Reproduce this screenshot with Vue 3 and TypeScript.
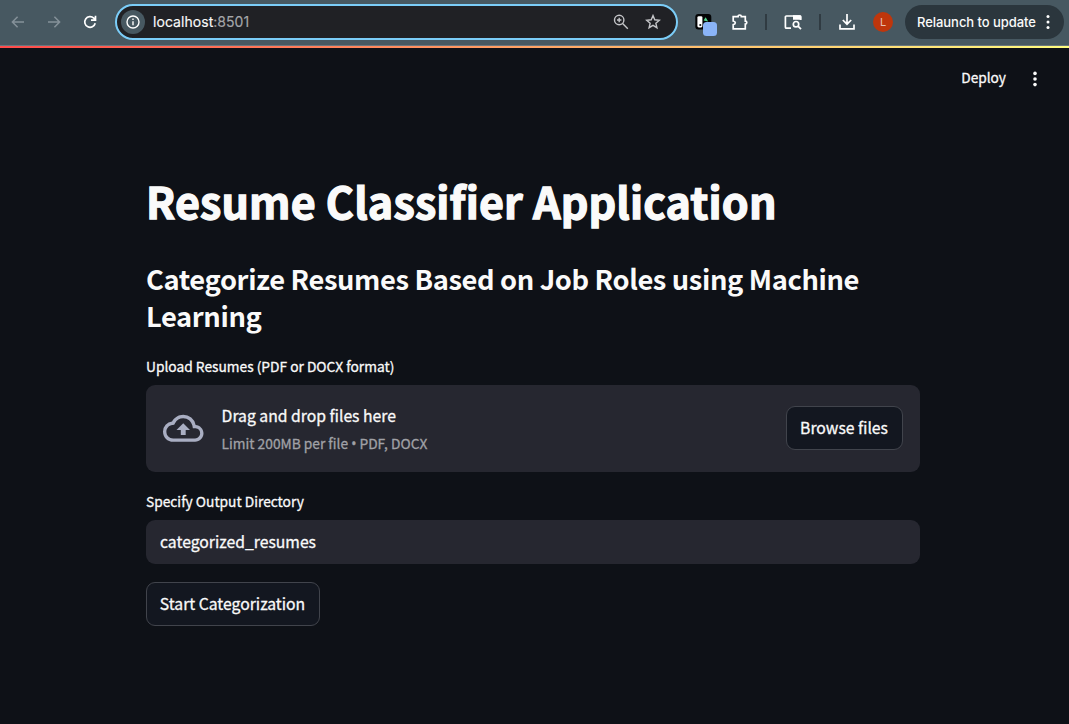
<script setup lang="ts">
import { ref } from 'vue'

const outputDirectory = ref('categorized_resumes')
</script>

<template>
  <div class="window">
    <header class="toolbar">
      <svg class="nav-icon dim back" viewBox="0 0 16 16"><path d="M14 8H2.6M7.6 2.8L2.4 8l5.2 5.2" /></svg>
      <svg class="nav-icon dim forward" viewBox="0 0 16 16"><path d="M2 8h11.4M8.4 2.8L13.6 8l-5.2 5.2" /></svg>
      <svg class="nav-icon reload" viewBox="0 0 16 16"><path d="M13.2 9.2A5.3 5.3 0 1 1 11.8 4.2L13.4 5.8M13.5 1.8V6.2H9" /></svg>
      <div class="address">
        <span class="site-info">
          <svg viewBox="0 0 16 16"><circle cx="8" cy="8" r="6" /><path d="M8 7.2v4M8 4.6v1.5" /></svg>
        </span>
        <span class="url">localhost<span class="port">:8501</span></span>
        <svg class="magnifier" viewBox="0 0 16 16"><circle cx="6.2" cy="6" r="4.7" /><path d="M9.6 9.5L14.8 14.7M6.2 3.8v4.4M4 6h4.4" /></svg>
        <svg class="star" viewBox="0 0 16 16"><path d="M8 1.6l1.75 4.2 4.6.4-3.5 3 1.05 4.5L8 11.3l-3.9 2.4 1.05-4.5-3.5-3 4.6-.4z" /></svg>
      </div>
      <span class="extension">
        <svg viewBox="0 0 24 28">
          <rect x="0.3" y="6" width="16" height="15.5" rx="3" fill="#030405" />
          <rect x="2.4" y="8.2" width="5" height="11.2" rx="1.4" fill="#fff" />
          <circle cx="5.3" cy="17" r="1.1" fill="#111" />
          <path d="M8.6 12.6l2-3.4 2.6 4.4z" fill="#54d58c" />
          <rect x="8" y="14" width="14" height="14" rx="3.5" fill="#8ab4f8" />
        </svg>
      </span>
      <svg class="puzzle" viewBox="0 0 18 18"><path d="M2.2 3.6h4.9a1.6 1.6 0 0 1 3.2 0h4v4.5a1.5 1.5 0 0 1 0 3v4.7H2.2v-4.1c2.8-.5 2.8-3.2 0-3.7z" /></svg>
      <i class="separator first"></i>
      <svg class="side-search" viewBox="0 0 18 18">
        <path d="M7 15.2H2.4a1 1 0 0 1-1-1V4a1 1 0 0 1 1-1h13.2a1 1 0 0 1 1 1v3" />
        <path class="solid" d="M9 2.2h7.2a1.2 1.2 0 0 1 1.2 1.2V6.8H9z" />
        <circle cx="12" cy="11.2" r="2.7" /><path d="M14 13.2l3 3" />
      </svg>
      <i class="separator second"></i>
      <svg class="download" viewBox="0 0 18 18"><path d="M9 1v10M4.8 7L9 11.2 13.2 7M2 11.5v4.3h14v-4.3" /></svg>
      <span class="avatar">L</span>
      <div class="relaunch">
        <span>Relaunch to update</span>
        <svg viewBox="0 0 4 16"><circle cx="2" cy="2.4" r="1.5" /><circle cx="2" cy="8" r="1.5" /><circle cx="2" cy="13.6" r="1.5" /></svg>
      </div>
    </header>
    <div class="decoration"></div>

    <div class="app-actions">
      <span class="deploy">Deploy</span>
      <svg viewBox="0 0 6 18"><circle cx="3" cy="3.4" r="1.8" /><circle cx="3" cy="9" r="1.8" /><circle cx="3" cy="14.6" r="1.8" /></svg>
    </div>

    <main>
      <h1>Resume Classifier Application</h1>
      <h3>Categorize Resumes Based on Job Roles using Machine Learning</h3>

      <div class="label upload-label">Upload Resumes (PDF or DOCX format)</div>
      <section class="dropzone">
        <svg class="cloud" viewBox="0 0 24 24">
          <path d="M19.35 10.04A7.49 7.49 0 0 0 12 4C9.11 4 6.6 5.64 5.35 8.04A5.994 5.994 0 0 0 0 14c0 3.31 2.69 6 6 6h13c2.76 0 5-2.24 5-5 0-2.64-2.05-4.78-4.65-4.96zM19 18H6c-2.21 0-4-1.79-4-4 0-2.05 1.53-3.76 3.56-3.97l1.07-.11.5-.95A5.469 5.469 0 0 1 12 6c2.62 0 4.88 1.86 5.39 4.43l.3 1.5 1.53.11A2.98 2.98 0 0 1 22 15c0 1.65-1.35 3-3 3zM8 13h2.55v3h2.9v-3H16l-4-4z" />
        </svg>
        <div class="instructions">
          <div class="primary">Drag and drop files here</div>
          <div class="secondary">Limit 200MB per file <span class="bullet">•</span> PDF, DOCX</div>
        </div>
        <button class="browse" type="button">Browse files</button>
      </section>

      <label class="label directory-label" for="directory">Specify Output Directory</label>
      <input id="directory" v-model="outputDirectory" type="text" />
      <button class="start" type="button">Start Categorization</button>
    </main>
  </div>
</template>

<style>
html,
body {
  background: #0e1117;
  overflow: hidden;
}
</style>

<style scoped>
* {
  box-sizing: border-box;
}

.window {
  width: 1069px;
  height: 724px;
  overflow: hidden;
  background: #0e1117;
  color: #fafafa;
  font-family: "Noto Sans CJK SC", "Noto Sans", sans-serif;
  font-size: 16px;
  -webkit-text-stroke: 0.3px;
}

svg {
  display: block;
  flex: none;
}

.toolbar {
  display: flex;
  align-items: center;
  height: 45px;
  padding-bottom: 1px;
  padding-left: 10px;
  background: #475861;
  font-family: Inter, "Liberation Sans", sans-serif;
  -webkit-text-stroke: 0;
}

.toolbar svg {
  fill: none;
  stroke: #fff;
  stroke-width: 1.7;
}

.nav-icon {
  width: 16px;
  height: 16px;
}

.toolbar .dim {
  stroke: #859199;
  stroke-width: 1.5;
}

.forward {
  margin-left: 20px;
}

.reload {
  margin-left: 20px;
}

.address {
  display: flex;
  align-items: center;
  width: 563px;
  height: 36px;
  margin-left: 17px;
  padding-left: 4px;
  border: 2px solid #7bcdf8;
  border-radius: 18px;
  background: #202125;
}

.site-info {
  display: flex;
  align-items: center;
  justify-content: center;
  width: 24px;
  height: 24px;
  border-radius: 50%;
  background: #475861;
}

.site-info svg {
  width: 16px;
  height: 16px;
  stroke-width: 1.4;
}

.url {
  width: 460px;
  margin-left: 8px;
  font-size: 14px;
  line-height: 20px;
  letter-spacing: 0.05px;
  -webkit-text-stroke: 0.15px;
}

.port {
  color: #a5a7aa;
}

.toolbar .magnifier,
.toolbar .star {
  width: 16px;
  height: 16px;
  stroke: #c4c5c8;
  stroke-width: 1.4;
}

.star {
  margin-left: 16px;
}

.extension {
  margin-left: 17px;
}

.toolbar .extension svg {
  width: 24px;
  height: 28px;
  stroke: none;
}

.puzzle,
.side-search,
.download {
  width: 18px;
  height: 18px;
}

.puzzle {
  margin-left: 12px;
}

.toolbar .side-search .solid {
  fill: #fff;
  stroke: none;
}

.separator {
  width: 2px;
  height: 16px;
  background: #303b42;
}

.first {
  margin-left: 16px;
}

.side-search {
  margin-left: 17px;
}

.second {
  margin-left: 17px;
}

.download {
  margin-left: 17px;
}

.avatar {
  width: 20px;
  height: 20px;
  margin-left: 17px;
  border-radius: 50%;
  background: #bf360c;
  color: #e6c0b3;
  font-size: 11px;
  line-height: 20px;
  text-align: center;
}

.relaunch {
  display: flex;
  align-items: center;
  width: 159px;
  height: 34px;
  margin-left: 12px;
  padding-left: 12px;
  border-radius: 17px;
  background: #2b363d;
  font-size: 13px;
  font-weight: 500;
  letter-spacing: -0.05px;
  white-space: nowrap;
}

.relaunch span {
  width: 129px;
}

.toolbar .relaunch svg {
  width: 4px;
  height: 16px;
  fill: #fff;
  stroke: none;
}

.decoration {
  height: 3px;
  border-top: 1px solid #68767e;
  background: linear-gradient(90deg, #ff4b4b, #fffd80);
}

.app-actions {
  display: flex;
  align-items: center;
  justify-content: flex-end;
  height: 62px;
  padding-right: 31px;
  font-size: 13.7px;
}

.deploy {
  padding-bottom: 5px;
}

.app-actions svg {
  width: 6px;
  height: 18px;
  margin-left: 26px;
  fill: #fafafa;
}

main {
  width: 774px;
  margin-left: 146px;
}

h1 {
  margin: 61px 0 0;
  font-size: 43px;
  font-weight: 700;
  line-height: 58px;
  letter-spacing: 0.16px;
  white-space: nowrap;
  -webkit-text-stroke: 1.3px;
}

h3 {
  margin: 31px 0 0;
  font-size: 27.3px;
  font-weight: 700;
  line-height: 37px;
  letter-spacing: -0.38px;
  -webkit-text-stroke: 0;
}

.label {
  display: block;
  font-size: 13.75px;
  line-height: 22px;
}

.upload-label {
  margin-top: 21px;
}

.dropzone {
  display: flex;
  align-items: center;
  height: 87px;
  margin-top: 8px;
  padding: 0 17px 1px;
  border-radius: 9px;
  background: #262730;
}

.cloud {
  width: 40.5px;
  height: 40.5px;
  fill: #a9aec2;
}

.instructions {
  flex: 1;
  margin-top: 2px;
  margin-left: 18.1px;
}

.primary {
  font-size: 15.72px;
  line-height: 28px;
}

.secondary {
  color: #a0a1a6;
  font-size: 13.75px;
  line-height: 27px;
}

.bullet {
  font-family: "Noto Sans", sans-serif;
  line-height: 1;
}

button {
  height: 44px;
  padding: 0 1px 2px 0;
  border: 1px solid #41444c;
  border-radius: 9px;
  background: #131720;
  color: #fafafa;
  font: inherit;
  font-size: 15.72px;
}

.browse {
  width: 117px;
}

.directory-label {
  margin-top: 18px;
}

input {
  display: block;
  width: 774px;
  height: 44px;
  margin: 8px 0 18px;
  padding: 0 14px 2px;
  border: 0;
  border-radius: 9px;
  background: #262730;
  color: #fafafa;
  font: inherit;
  font-size: 15.72px;
  -webkit-text-stroke: 0.3px;
}

.start {
  width: 174px;
}
</style>
